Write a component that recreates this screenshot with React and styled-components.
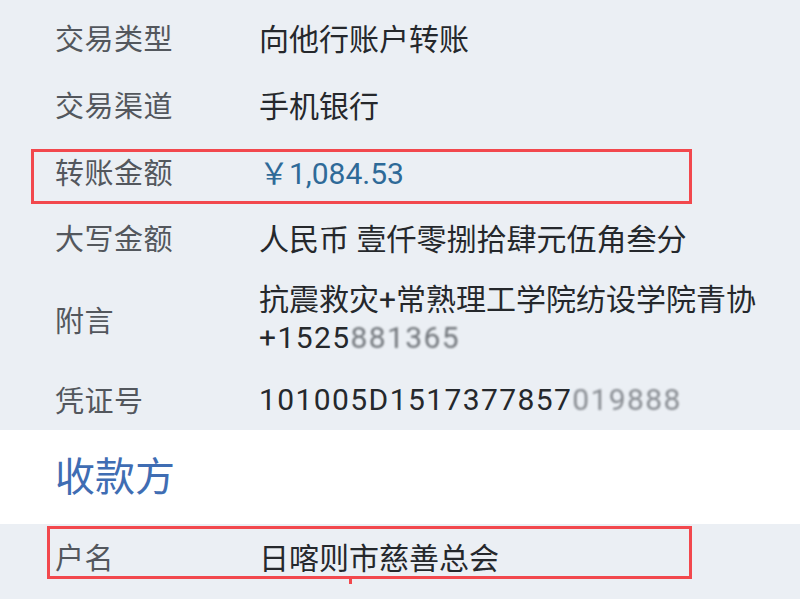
import React from "react";
import styled, { createGlobalStyle } from "styled-components";

const GlobalStyle = createGlobalStyle`
  html, body {
    margin: 0;
    padding: 0;
    background: #ebeff4;
  }
  body {
    font-family: Roboto, "Noto Sans CJK SC", sans-serif;
    width: 800px;
    height: 599px;
    overflow: hidden;
  }
`;

const rows = [
  { label: "交易类型", value: "向他行账户转账", h: 66 },
  { label: "交易渠道", value: "手机银行", h: 68 },
  { label: "转账金额", value: "￥1,084.53", amount: true, marked: true, h: 66 },
  { label: "大写金额", value: "人民币 壹仟零捌拾肆元伍角叁分", h: 66 },
];

const App = () => {
  return (
    <Page>
      <GlobalStyle />
      <Section>
        {rows.map((r) => (
          <Row key={r.label} $h={r.h}>
            {r.marked && <Highlight $top={11} $left={-24} $width={661} $height={55} />}
            <Label>{r.label}</Label>
            <Value $amount={r.amount}>{r.value}</Value>
          </Row>
        ))}
        <Row $h={98}>
          <Label>附言</Label>
          <Value $multi>
            抗震救灾+常熟理工学院纺设学院青协
            <br />
            <Digits>
              +1525<Blurred>881365</Blurred>
            </Digits>
          </Value>
        </Row>
        <Row $h={62}>
          <Label>凭证号</Label>
          <Value $digits>
            101005D1517377857<Blurred $fade>019888</Blurred>
          </Value>
        </Row>
      </Section>
      <Band>
        <Heading>收款方</Heading>
      </Band>
      <Section>
        <Row $h={64}>
          <Highlight $top={2} $left={-8} $width={645} $height={53} $tick />
          <Label>户名</Label>
          <Value>日喀则市慈善总会</Value>
        </Row>
      </Section>
    </Page>
  );
};

export default App;

const Page = styled.div`
  width: 800px;
  height: 599px;
  padding-top: 4px;
  box-sizing: border-box;
  background: #ebeff4;
`;

const Section = styled.div`
  padding-left: 55px;
  background: #ebeff4;
`;

const Row = styled.div`
  position: relative;
  display: flex;
  align-items: center;
  height: ${(p) => p.$h}px;
  box-sizing: border-box;
`;

const Label = styled.div`
  width: 204px;
  flex-shrink: 0;
  font-size: 29px;
  color: #53575d;
  letter-spacing: 0.5px;
`;

const Value = styled.div`
  font-size: 30px;
  line-height: ${(p) => (p.$multi ? "38px" : "normal")};
  color: ${(p) => (p.$amount ? "#2e6a98" : "#25282c")};
  letter-spacing: ${(p) => (p.$digits ? "1.4px" : "0")};
  white-space: nowrap;
`;

const Digits = styled.span`
  letter-spacing: 1.4px;
`;

const Blurred = styled.span`
  filter: blur(1.3px);
  color: #5c6066;
  opacity: ${(p) => (p.$fade ? 0.7 : 0.85)};
`;

const Band = styled.div`
  height: 94px;
  background: #ffffff;
  display: flex;
  align-items: center;
  padding-left: 55px;
  padding-bottom: 6px;
  box-sizing: border-box;
`;

const Heading = styled.div`
  font-size: 40px;
  color: #3f6db3;
  font-family: "Noto Sans CJK SC", sans-serif;
`;

const Highlight = styled.div`
  position: absolute;
  top: ${(p) => p.$top}px;
  left: ${(p) => p.$left}px;
  width: ${(p) => p.$width}px;
  height: ${(p) => p.$height}px;
  border: 3px solid #f2484d;
  box-sizing: border-box;
  pointer-events: none;

  &::after {
    content: "";
    display: ${(p) => (p.$tick ? "block" : "none")};
    position: absolute;
    left: 299px;
    top: 100%;
    width: 3px;
    height: 8px;
    background: #f2484d;
  }
`;
